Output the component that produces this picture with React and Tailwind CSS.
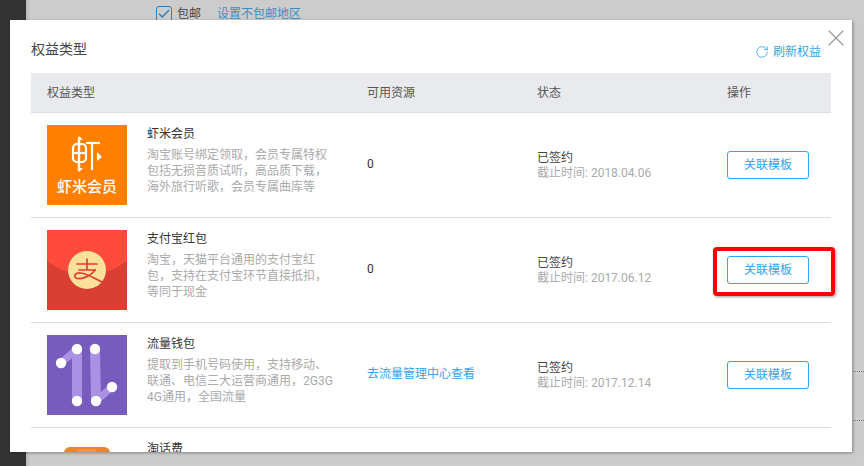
import React from "react";
import { RotateCw, X, Check } from "lucide-react";

const XiamiLogo = () => (
  <div className="relative w-20 h-20 bg-[#ff8000] shrink-0">
    <svg viewBox="0 0 80 80" className="w-20 h-20">
      <g fill="none" stroke="#fff" strokeWidth="2.2">
        <rect x="26" y="19" width="13" height="18" rx="4" />
        <path d="M26 28H39" />
        <path d="M32 12V46" strokeWidth="2.4" />
        <path d="M39 18H53" />
        <path d="M45 18V45" />
      </g>
      <path d="M32 11L36 15H32ZM32 47L36 43H32Z" fill="#fff" />
      <path d="M50 27L55 32L50 36Z" fill="#fff" />
    </svg>
    <div className="absolute left-0 right-0 top-[53px] text-center text-[15px] leading-[18px] font-medium text-white">
      虾米会员
    </div>
  </div>
);

const AlipayLogo = () => (
  <svg viewBox="0 0 80 80" className="w-20 h-20 shrink-0 bg-[#d93f33]">
    <path d="M0 0H80V31Q40 60 0 31Z" fill="#ff4b3c" />
    <circle cx="40" cy="41" r="19" fill="#c9382d" opacity="0.5" />
    <circle cx="40" cy="40" r="19" fill="#fde09a" />
    <g fill="none" stroke="#d93f33" strokeWidth="1.7" strokeLinecap="round">
      <path d="M40 29V39" />
      <path d="M30 34H50" />
      <path d="M32 40H48" />
      <path d="M48 40C43 47 33 50 29 48C26 46 29 42 34 43C41 44 48 49 55 52" />
    </g>
  </svg>
);

const FlowLogo = () => (
  <svg viewBox="0 0 80 80" className="w-20 h-20 shrink-0 bg-[#775bbd]">
    <g fill="none" stroke="#a992e6" strokeWidth="10">
      <path d="M14 28L30 14" strokeWidth="7" />
      <path d="M30 14V66" />
      <path d="M48 14L49 66" />
      <path d="M49 66L65 52" strokeWidth="7" />
    </g>
    <g fill="#fff">
      <circle cx="14" cy="28" r="5.2" />
      <circle cx="30" cy="14" r="5.2" />
      <circle cx="30" cy="66" r="5.2" />
      <circle cx="48" cy="14" r="5.2" />
      <circle cx="49" cy="66" r="5.2" />
      <circle cx="65" cy="52" r="5.2" />
    </g>
  </svg>
);

const PhoneFeeLogo = () => (
  <svg viewBox="0 0 80 80" className="w-20 h-20 shrink-0">
    <rect x="17" y="7" width="46" height="50" rx="6" fill="#e98433" />
    <rect x="30" y="9" width="20" height="6" rx="3" fill="#ec9350" />
  </svg>
);

const rows = [
  {
    logo: <XiamiLogo />,
    name: "虾米会员",
    desc: "淘宝账号绑定领取，会员专属特权包括无损音质试听，高品质下载，海外旅行听歌，会员专属曲库等",
    resource: "0",
    date: "2018.04.06",
  },
  {
    logo: <AlipayLogo />,
    name: "支付宝红包",
    desc: "淘宝，天猫平台通用的支付宝红包，支持在支付宝环节直接抵扣，等同于现金",
    resource: "0",
    date: "2017.06.12",
  },
  {
    logo: <FlowLogo />,
    name: "流量钱包",
    desc: "提取到手机号码使用，支持移动、联通、电信三大运营商通用，2G3G 4G通用，全国流量",
    link: "去流量管理中心查看",
    date: "2017.12.14",
  },
  {
    logo: <PhoneFeeLogo />,
    name: "淘话费",
    desc: "",
    resource: "",
    date: "",
  },
];

const App = () => {
  return (
    <div className="relative flex w-[864px] h-[466px] overflow-hidden bg-[#cccccc] text-xs font-[Roboto,'Noto_Sans_CJK_SC',sans-serif]">
      {/* page behind the dialog */}
      <div className="w-[26px] bg-[#333333] shrink-0" />
      <div className="w-[4px] bg-gradient-to-r from-[#b8b8b8] to-[#cccccc] shrink-0" />
      <div className="flex-1 flex flex-col">
        <div className="flex items-center h-4 mt-[6px] ml-[126px]">
          <div className="flex items-center justify-center w-4 h-4 rounded-[3px] border border-[#2f7fb8] text-[#2f7fb8]">
            <Check className="w-3.5 h-3.5" strokeWidth={2.5} />
          </div>
          <span className="ml-[5px] text-[#444444]">包邮</span>
          <span className="ml-[16px] text-[#3a8ec4]">设置不包邮地区</span>
        </div>
        <div className="mt-[349px] border-t border-dotted border-[#777777]" />
        <div className="mt-[48px] border-t border-dotted border-[#777777]" />
      </div>

      {/* dialog */}
      <div className="absolute left-[10px] top-[20px] w-[842px] h-[432px] overflow-hidden bg-white shadow-[1px_1px_3px_rgba(0,0,0,0.35)]">
        <div className="flex items-center justify-between h-[53px] pl-[21px] pr-[31px]">
          <span className="text-sm text-[#444444] mt-[4px]">权益类型</span>
          <span className="flex items-center gap-1 mt-[10px] text-[#2fa4f0]">
            <RotateCw className="w-[14px] h-[14px]" strokeWidth={1.4} />
            刷新权益
          </span>
        </div>
        <button className="absolute right-[2px] top-[4px] text-[#999999]">
          <X className="w-7 h-7" strokeWidth={1} />
        </button>

        <div className="mx-[21px] w-[800px]">
          <div className="flex items-center h-10 bg-[#e9eaee] border-b border-[#dcdde2] text-[#555555]">
            <div className="w-[336px] pl-4">权益类型</div>
            <div className="w-[170px]">可用资源</div>
            <div className="w-[190px]">状态</div>
            <div>操作</div>
          </div>

          {rows.map((row) => (
            <div
              key={row.name}
              className="flex items-center h-[105px] border-b border-[#dddddd]"
            >
              <div className="flex w-[336px] h-full pl-4 pt-3">
                {row.logo}
                <div className="ml-5 w-[190px] pt-px">
                  <div className="leading-4 text-[#333333]">{row.name}</div>
                  <div className="mt-[5px] leading-4 text-[#aaaaaa]">{row.desc}</div>
                </div>
              </div>
              <div className="w-[170px] -mt-[3px]">
                {row.link ? (
                  <span className="text-[#2fa4f0]">{row.link}</span>
                ) : (
                  <span className="text-[#333333]">{row.resource}</span>
                )}
              </div>
              <div className="w-[190px] mt-[1px]">
                {row.date && (
                  <>
                    <div className="leading-[15px] text-[#444444]">已签约</div>
                    <div className="leading-[15px] text-[#aaaaaa]">截止时间: {row.date}</div>
                  </>
                )}
              </div>
              {row.date && (
                <button className="w-[82px] h-7 rounded-[3px] border border-[#2fa4f0] text-[#2fa4f0] -mt-[1px]">
                  关联模板
                </button>
              )}
            </div>
          ))}
        </div>
      </div>

      {/* red annotation box */}
      <div className="absolute left-[713px] top-[247px] w-[122px] h-[49px] rounded-[4px] border-[4px] border-[#ff0000] shadow-[1px_1px_3px_rgba(0,0,0,0.4)]" />
    </div>
  );
};

export default App;
